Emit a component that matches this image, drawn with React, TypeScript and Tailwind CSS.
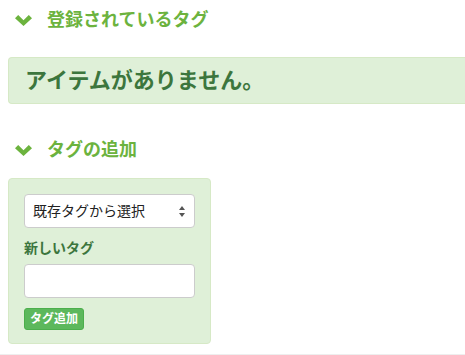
import React from "react";

const Chevron = () => (
  <svg width="17" height="11" viewBox="0 0 17 11" className="shrink-0">
    <path d="M0 3.2 L3.2 0 L8.5 5.2 L13.8 0 L17 3.2 L8.5 11 Z" fill="#6cb33e" />
  </svg>
);

export default function App() {
  const font = { fontFamily: '"Liberation Sans", "Noto Sans CJK JP", sans-serif' };
  return (
    <div className="w-[465px] h-[355px] overflow-hidden bg-white relative" style={font}>
      <div className="flex items-center gap-[15px] pl-[15px] pt-[10px] h-[30px]">
        <Chevron />
        <span className="text-[18px] leading-[20px] font-bold text-[#6cb33e]">登録されているタグ</span>
      </div>
      <div className="ml-2 mt-[27px] h-[47px] flex items-center pl-4 bg-[#dff0d8] border border-r-0 border-[#d6e9c6] rounded-l-[4px]">
        <span className="text-[22px] leading-[24px] font-bold text-[#3c763d]">アイテムがありません。</span>
      </div>
      <div className="flex items-center gap-[15px] pl-[15px] mt-[36px] h-[20px]">
        <Chevron />
        <span className="text-[18px] leading-[20px] font-bold text-[#6cb33e]">タグの追加</span>
      </div>
      <div className="ml-2 mt-[18px] w-[203px] h-[166px] bg-[#dff0d8] border border-[#d6e9c6] rounded-[4px] px-[15px] pt-[15px] flex flex-col">
        <div className="h-[34px] bg-white border border-[#cccccc] rounded-[4px] flex items-center justify-between pl-[8px] pr-[9px]">
          <span className="text-[14px] text-[#222]">既存タグから選択</span>
          <svg width="6" height="11" viewBox="0 0 6 11">
            <path d="M3 0 L6 4 L0 4 Z" fill="#555" />
            <path d="M3 11 L6 7 L0 7 Z" fill="#555" />
          </svg>
        </div>
        <div className="mt-[10px] text-[14px] leading-[20px] font-bold text-[#3c763d]">新しいタグ</div>
        <div className="mt-[6px] h-[34px] bg-white border border-[#cccccc] rounded-[4px]" />
        <button className="mt-[10px] self-start h-[22px] px-[5px] bg-[#5cb85c] border border-[#4cae4c] rounded-[3px] text-white text-[12px] leading-[18px] font-semibold">
          タグ追加
        </button>
      </div>
      <div className="absolute left-0 right-0 top-[354px] h-px bg-[#eeeeee]" />
    </div>
  );
}
